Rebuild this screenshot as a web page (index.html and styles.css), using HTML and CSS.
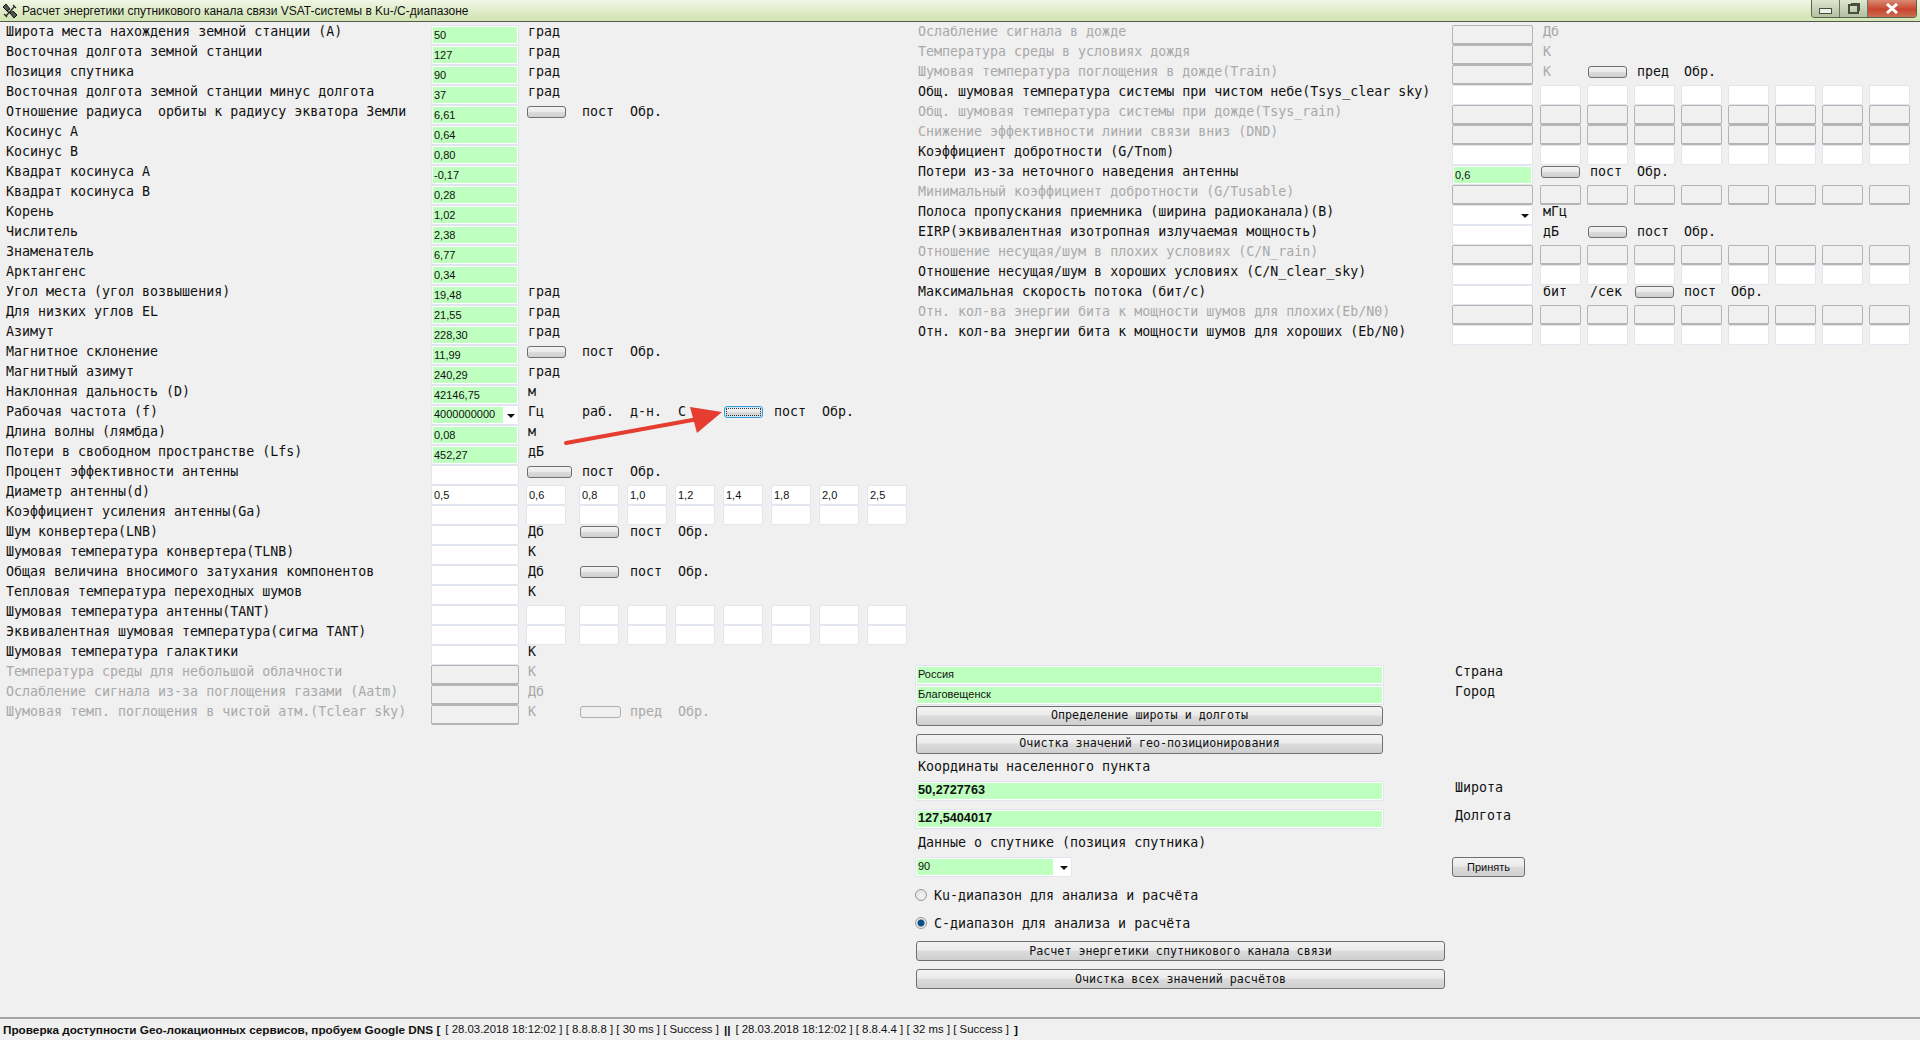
FILE: index.html
```html
<!DOCTYPE html>
<html lang="ru">

<head>
  <meta charset="UTF-8">
  <meta name="viewport" content="width=device-width">
  <title>Расчет энергетики спутникового канала связи</title>
  <link rel="stylesheet" href="styles.css">
</head>

<body>

  <header class="titlebar">
    <svg class="app-icon" width="16" height="16" viewBox="0 0 16 16">
      <path d="M1 4 L4 1 L8 6 L5 8 Z M8 10 L11 8 L15 12 L12 15 Z" fill="#555" stroke="#111" stroke-width="1" />
      <path d="M5 8 L8 10 M11 2 L14 5 M12 4 L4 13 M2 11 L5 14" fill="none" stroke="#222" stroke-width="1.2" />
    </svg>
    <span class="title">Расчет энергетики спутникового канала связи VSAT-системы в Ku-/C-диапазоне</span>
    <div class="winbtns">
      <span class="winbtn min"><i></i></span>
      <span class="winbtn max"><i></i></span>
      <span class="winbtn close">
        <svg width="16" height="11" viewBox="0 0 16 11">
          <path d="M3 1 L13 10 M13 1 L3 10" stroke="#fff" stroke-width="3" />
        </svg>
      </span>
    </div>
  </header>

  <main class="main">

    <section class="left">
      <div class="row"><label>Широта места нахождения земной станции (А)</label><input class="f ok" value="50"><div class="tail"><span class="t first">град</span></div></div>
      <div class="row"><label>Восточная долгота земной станции</label><input class="f ok" value="127"><div class="tail"><span class="t first">град</span></div></div>
      <div class="row"><label>Позиция спутника</label><input class="f ok" value="90"><div class="tail"><span class="t first">град</span></div></div>
      <div class="row"><label>Восточная долгота земной станции минус долгота</label><input class="f ok" value="37"><div class="tail"><span class="t first">град</span></div></div>
      <div class="row"><label>Отношение радиуса  орбиты к радиусу экватора Земли</label><input class="f ok" value="6,61"><div class="tail"><button class="b"></button><span class="t">пост</span><span class="t">Обр.</span></div></div>
      <div class="row"><label>Косинус А</label><input class="f ok" value="0,64"></div>
      <div class="row"><label>Косинус В</label><input class="f ok" value="0,80"></div>
      <div class="row"><label>Квадрат косинуса А</label><input class="f ok" value="-0,17"></div>
      <div class="row"><label>Квадрат косинуса В</label><input class="f ok" value="0,28"></div>
      <div class="row"><label>Корень</label><input class="f ok" value="1,02"></div>
      <div class="row"><label>Числитель</label><input class="f ok" value="2,38"></div>
      <div class="row"><label>Знаменатель</label><input class="f ok" value="6,77"></div>
      <div class="row"><label>Арктангенс</label><input class="f ok" value="0,34"></div>
      <div class="row"><label>Угол места (угол возвышения)</label><input class="f ok" value="19,48"><div class="tail"><span class="t first">град</span></div></div>
      <div class="row"><label>Для низких углов EL</label><input class="f ok" value="21,55"><div class="tail"><span class="t first">град</span></div></div>
      <div class="row"><label>Азимут</label><input class="f ok" value="228,30"><div class="tail"><span class="t first">град</span></div></div>
      <div class="row"><label>Магнитное склонение</label><input class="f ok" value="11,99"><div class="tail"><button class="b"></button><span class="t">пост</span><span class="t">Обр.</span></div></div>
      <div class="row"><label>Магнитный азимут</label><input class="f ok" value="240,29"><div class="tail"><span class="t first">град</span></div></div>
      <div class="row"><label>Наклонная дальность (D)</label><input class="f ok" value="42146,75"><div class="tail"><span class="t first">м</span></div></div>
      <div class="row"><label>Рабочая частота (f)</label><div class="combo f"><span class="combo-val">4000000000</span><i class="arrow"></i></div><div class="tail"><span class="t first">Гц</span><span class="t">раб.</span><span class="t">д-н.</span><span class="t">С</span><button class="b focus"></button><span class="t">пост</span><span class="t">Обр.</span></div></div>
      <div class="row"><label>Длина волны (лямбда)</label><input class="f ok" value="0,08"><div class="tail"><span class="t first">м</span></div></div>
      <div class="row"><label>Потери в свободном пространстве (Lfs)</label><input class="f ok" value="452,27"><div class="tail"><span class="t first">дБ</span></div></div>
      <div class="row"><label>Процент эффективности антенны</label><input class="f"><div class="tail"><button class="b wide"></button><span class="t">пост</span><span class="t">Обр.</span></div></div>
      <div class="row"><label>Диаметр антенны(d)</label><input class="f" value="0,5"><div class="tail"><input class="c" value="0,6"><input class="c" value="0,8"><input class="c" value="1,0"><input class="c" value="1,2"><input class="c" value="1,4"><input class="c" value="1,8"><input class="c" value="2,0"><input class="c" value="2,5"></div></div>
      <div class="row"><label>Коэффициент усиления антенны(Ga)</label><input class="f"><div class="tail"><input class="c"><input class="c"><input class="c"><input class="c"><input class="c"><input class="c"><input class="c"><input class="c"></div></div>
      <div class="row"><label>Шум конвертера(LNB)</label><input class="f"><div class="tail"><span class="t first">Дб</span><button class="b"></button><span class="t">пост</span><span class="t">Обр.</span></div></div>
      <div class="row"><label>Шумовая температура конвертера(TLNB)</label><input class="f"><div class="tail"><span class="t first">К</span></div></div>
      <div class="row"><label>Общая величина вносимого затухания компонентов</label><input class="f"><div class="tail"><span class="t first">Дб</span><button class="b"></button><span class="t">пост</span><span class="t">Обр.</span></div></div>
      <div class="row"><label>Тепловая температура переходных шумов</label><input class="f"><div class="tail"><span class="t first">К</span></div></div>
      <div class="row"><label>Шумовая температура антенны(TANT)</label><input class="f"><div class="tail"><input class="c"><input class="c"><input class="c"><input class="c"><input class="c"><input class="c"><input class="c"><input class="c"></div></div>
      <div class="row"><label>Эквивалентная шумовая температура(сигма TANT)</label><input class="f"><div class="tail"><input class="c"><input class="c"><input class="c"><input class="c"><input class="c"><input class="c"><input class="c"><input class="c"></div></div>
      <div class="row"><label>Шумовая температура галактики</label><input class="f"><div class="tail"><span class="t first">К</span></div></div>
      <div class="row off"><label>Температура среды для небольшой облачности</label><input class="f" disabled><div class="tail"><span class="t first">К</span></div></div>
      <div class="row off"><label>Ослабление сигнала из-за поглощения газами (Aatm)</label><input class="f" disabled><div class="tail"><span class="t first">Дб</span></div></div>
      <div class="row off"><label>Шумовая темп. поглощения в чистой атм.(Tclear sky)</label><input class="f" disabled><div class="tail"><span class="t first">К</span><button class="b" disabled></button><span class="t">пред</span><span class="t">Обр.</span></div></div>
    </section>

    <section class="right">
      <div class="row off"><label>Ослабление сигнала в дожде</label><input class="f" disabled><div class="tail"><span class="t">Дб</span></div></div>
      <div class="row off"><label>Температура среды в условиях дождя</label><input class="f" disabled><div class="tail"><span class="t">К</span></div></div>
      <div class="row off"><label>Шумовая температура поглощения в дожде(Train)</label><input class="f" disabled><div class="tail"><span class="t">К</span><button class="b on"></button><span class="t on">пред</span><span class="t on">Обр.</span></div></div>
      <div class="row"><label>Общ. шумовая температура системы при чистом небе(Tsys_clear sky)</label><input class="f"><div class="tail"><input class="c"><input class="c"><input class="c"><input class="c"><input class="c"><input class="c"><input class="c"><input class="c"></div></div>
      <div class="row off"><label>Общ. шумовая температура системы при дожде(Tsys_rain)</label><input class="f" disabled><div class="tail"><input class="c" disabled><input class="c" disabled><input class="c" disabled><input class="c" disabled><input class="c" disabled><input class="c" disabled><input class="c" disabled><input class="c" disabled></div></div>
      <div class="row off"><label>Снижение эффективности линии связи вниз (DND)</label><input class="f" disabled><div class="tail"><input class="c" disabled><input class="c" disabled><input class="c" disabled><input class="c" disabled><input class="c" disabled><input class="c" disabled><input class="c" disabled><input class="c" disabled></div></div>
      <div class="row"><label>Коэффициент добротности (G/Tnom)</label><input class="f"><div class="tail"><input class="c"><input class="c"><input class="c"><input class="c"><input class="c"><input class="c"><input class="c"><input class="c"></div></div>
      <div class="row"><label>Потери из-за неточного наведения антенны</label><input class="f ok" value="0,6"><div class="tail"><button class="b"></button><span class="t">пост</span><span class="t">Обр.</span></div></div>
      <div class="row off"><label>Минимальный коэффициент добротности (G/Tusable)</label><input class="f" disabled><div class="tail"><input class="c" disabled><input class="c" disabled><input class="c" disabled><input class="c" disabled><input class="c" disabled><input class="c" disabled><input class="c" disabled><input class="c" disabled></div></div>
      <div class="row"><label>Полоса пропускания приемника (ширина радиоканала)(B)</label><div class="combo f"><i class="arrow"></i></div><div class="tail"><span class="t">мГц</span></div></div>
      <div class="row"><label>EIRP(эквивалентная изотропная излучаемая мощность)</label><input class="f"><div class="tail"><span class="t">дБ</span><button class="b"></button><span class="t">пост</span><span class="t">Обр.</span></div></div>
      <div class="row off"><label>Отношение несущая/шум в плохих условиях (C/N_rain)</label><input class="f" disabled><div class="tail"><input class="c" disabled><input class="c" disabled><input class="c" disabled><input class="c" disabled><input class="c" disabled><input class="c" disabled><input class="c" disabled><input class="c" disabled></div></div>
      <div class="row"><label>Отношение несущая/шум в хороших условиях (C/N_clear_sky)</label><input class="f"><div class="tail"><input class="c"><input class="c"><input class="c"><input class="c"><input class="c"><input class="c"><input class="c"><input class="c"></div></div>
      <div class="row"><label>Максимальная скорость потока (бит/с)</label><input class="f"><div class="tail"><span class="t">бит</span><span class="t">/сек</span><button class="b"></button><span class="t">пост</span><span class="t">Обр.</span></div></div>
      <div class="row off"><label>Отн. кол-ва энергии бита к мощности шумов для плохих(Eb/N0)</label><input class="f" disabled><div class="tail"><input class="c" disabled><input class="c" disabled><input class="c" disabled><input class="c" disabled><input class="c" disabled><input class="c" disabled><input class="c" disabled><input class="c" disabled></div></div>
      <div class="row"><label>Отн. кол-ва энергии бита к мощности шумов для хороших (Eb/N0)</label><input class="f"><div class="tail"><input class="c"><input class="c"><input class="c"><input class="c"><input class="c"><input class="c"><input class="c"><input class="c"></div></div>

      <div class="geo">
        <div class="geo-row geo-city"><input class="wide-f ok" value="Россия"><span class="side">Страна</span></div>
        <div class="geo-row geo-city"><input class="wide-f ok" value="Благовещенск"><span class="side">Город</span></div>
        <button class="b big short find">Определение широты и долготы</button>
        <button class="b big short clear">Очистка значений гео-позиционирования</button>
        <p class="caption coords">Координаты населенного пункта</p>
        <div class="geo-row"><input class="wide-f ok strong" value="50,2727763"><span class="side">Широта</span></div>
        <div class="geo-row lng"><input class="wide-f ok strong" value="127,5404017"><span class="side">Долгота</span></div>
        <p class="caption sat">Данные о спутнике (позиция спутника)</p>
        <div class="sat-row">
          <div class="combo sat-combo"><span class="combo-val">90</span><i class="arrow"></i></div>
          <button class="b accept">Принять</button>
        </div>
        <p class="radio-line ku"><i class="radio"></i>Ku-диапазон для анализа и расчёта</p>
        <p class="radio-line c-band"><i class="radio checked"></i>С-диапазон для анализа и расчёта</p>
        <button class="b big long calc">Расчет энергетики спутникового канала связи</button>
        <button class="b big long clear-all">Очистка всех значений расчётов</button>
      </div>
    </section>

  </main>

  <footer class="status">
    <b>Проверка доступности Geo-локационных сервисов, пробуем Google DNS [</b>
    <span class="gap">[ 28.03.2018 18:12:02 ] [ 8.8.8.8 ] [ 30 ms ] [ Success ]</span>
    <b class="gap">||</b>
    <span class="gap">[ 28.03.2018 18:12:02 ] [ 8.8.4.4 ] [ 32 ms ] [ Success ]</span>
    <b class="gap">]</b>
  </footer>

  <svg class="pointer" width="170" height="44" viewBox="0 0 170 44">
    <path d="M6 38 L138 14" stroke="#e53d30" stroke-width="4" stroke-linecap="round" />
    <path d="M130 2 L162 7 L137 28 Z" fill="#e53d30" />
  </svg>

</body>

</html>
```

FILE: styles.css
```css
* {
  box-sizing: border-box;
  margin: 0;
  padding: 0;
}

html,
body {
  height: 100%;
}

body {
  position: relative;
  display: flex;
  flex-direction: column;
  overflow: hidden;
  background-color: #f0f0f0;
  color: #111;
  font-family: "DejaVu Sans Mono", monospace;
  font-size: 13.3px;
}

/* window title */
.titlebar {
  display: flex;
  align-items: center;
  height: 22px;
  flex: none;
  padding-left: 2px;
  background: linear-gradient(#f2f6e6, #d4e5b6 85%);
  border-bottom: 1px solid #55594c;
}

.app-icon {
  margin-right: 4px;
}

.title {
  font-family: "Liberation Sans", sans-serif;
  font-size: 12px;
  color: #111;
}

.winbtns {
  display: flex;
  align-self: flex-start;
  margin-left: auto;
  margin-right: 3px;
  height: 18px;
  border: 1px solid #58604e;
  border-top: none;
  border-radius: 0 0 4px 4px;
  overflow: hidden;
}

.winbtn {
  display: flex;
  align-items: center;
  justify-content: center;
  width: 28px;
  background: linear-gradient(#e0e6cf, #b2bfa0);
  border-right: 1px solid #6a7460;
}

.winbtn.min i {
  width: 13px;
  height: 6px;
  margin-top: 4px;
  background: #eef1ea;
  border: 1px solid #47503f;
}

.winbtn.max i {
  width: 11px;
  height: 10px;
  border: 2px solid #47503f;
  box-shadow: 2px -2px 0 -1px #47503f;
}

.winbtn.close {
  width: 48px;
  border-right: none;
  background: linear-gradient(#d98a74, #c8452e 55%, #c96e52);
}

/* form area */
.main {
  display: flex;
  flex: 1;
  padding-top: 3px;
}

.left {
  width: 918px;
  flex: none;
  padding-left: 6px;
}

.right {
  flex: 1;
}

.row {
  display: flex;
  height: 20px;
  white-space: pre;
}

.row label {
  flex: none;
  line-height: 14px;
}

.left .row label {
  width: 425px;
}

.right .row label {
  width: 534px;
}

.off label,
.off .t {
  color: #a9a9a9;
}

.off .t.on {
  color: #111;
}

/* fields */
input {
  font-family: "Liberation Sans", sans-serif;
  font-size: 11px;
  color: #111;
  background-color: #fff;
  border: 1px solid #e1e6ee;
  border-radius: 2px;
  padding: 0 2px 1px;
  outline: none;
}

input:disabled {
  background-color: #f0f0f0;
  border: 1px solid #b4b4b4;
  border-bottom: 2px solid #b4b4b4;
}

.ok {
  background-color: #bfffbf;
  box-shadow: inset 0 0 0 1px #fff;
}

.f {
  flex: none;
  height: 20px;
}

.left .f {
  width: 88px;
}

.right .f {
  width: 81px;
}

.c {
  width: 40px;
  height: 20px;
}

.right .c {
  width: 41px;
}

/* trailing columns of a row */
.tail {
  display: grid;
  grid-auto-flow: column;
  flex: none;
  margin-left: 7px;
  grid-template-columns: 53px repeat(7, 48px) 40px;
}

.right .tail {
  margin-left: 7px;
  grid-template-columns: repeat(8, 47px);
}

.t {
  line-height: 14px;
  padding-left: 3px;
}

.t.first {
  padding-left: 2px;
}

/* buttons */
.b {
  height: 12px;
  width: 39px;
  margin: 1px 0 0 1px;
  border: 1px solid #707070;
  border-radius: 3px;
  background: linear-gradient(#f3f3f3, #ebebeb 45%, #dcdcdc 50%, #cfcfcf);
  font-family: "DejaVu Sans Mono", monospace;
  font-size: 11.7px;
  color: #111;
}

.b.wide {
  width: 45px;
}

.b:disabled {
  background: #f0f0f0;
  border-color: #adadad;
  width: 41px;
}

.b.focus {
  border-color: #3c9bdc;
  box-shadow: inset 0 0 0 1px #cde8f8;
  outline: 1px dotted #333;
  outline-offset: -3px;
}

.b.big {
  display: block;
  height: 20px;
  margin: 0;
  margin-left: 1px;
}

.short {
  width: 467px;
  padding-bottom: 2px;
}

.long {
  width: 529px;
}

/* geo block under the right table */
.geo {
  margin-top: 320px;
  width: 640px;
  margin-left: -3px;
}

.geo-row {
  display: flex;
  align-items: flex-start;
  height: 20px;
}

.wide-f {
  width: 469px;
  height: 20px;
  flex: none;
  padding-bottom: 3px;
}

.geo-city {
  height: 20px;
}

.side {
  margin-left: 71px;
  line-height: 13px;
}

.strong {
  font-size: 12.7px;
  font-weight: bold;
}

.find {
  margin-top: 1px !important;
}

.clear {
  margin-top: 8px !important;
}

.caption {
  margin-left: 3px;
  line-height: 14px;
}

.coords {
  margin-top: 6px;
  margin-bottom: 7px;
}

.lng {
  margin-top: 8px;
}

.sat {
  margin-top: 7px;
  margin-bottom: 7px;
}

.sat-row {
  display: flex;
  height: 21px;
}

.combo {
  position: relative;
  background: #fff;
  border: 1px solid #e1e6ee;
  border-radius: 2px;
  padding: 1px;
  height: 20px;
  display: flex;
}

.combo-val {
  display: block;
  height: 100%;
  width: 70px;
  padding-left: 1px;
  background: #bfffbf;
  font-family: "Liberation Sans", sans-serif;
  font-size: 11px;
  line-height: 15px;
}

.arrow {
  position: absolute;
  top: 8px;
  right: 3px;
  border: 4px solid transparent;
  border-top-color: #111;
  border-bottom: none;
}

.sat-combo {
  width: 157px;
  flex: none;
}

.sat-combo .combo-val {
  width: 136px;
}

.accept {
  height: 20px;
  width: 73px;
  margin: 0 0 0 380px;
  font-family: "Liberation Sans", sans-serif;
  font-size: 11px;
}

.radio-line {
  display: flex;
  align-items: center;
  gap: 7px;
  height: 16px;
}

.ku {
  margin-top: 9px;
  margin-bottom: 12px;
}

.c-band {
  margin-bottom: 10px;
}

.radio {
  width: 12px;
  height: 12px;
  flex: none;
  border: 1px solid #9a9a9a;
  border-radius: 50%;
  background: radial-gradient(circle at 60% 60%, #f6f6f6, #d8d8d8);
}

.radio.checked {
  background: radial-gradient(circle, #0d4f86 0 3px, #e8e8e8 4px);
}

.clear-all {
  margin-top: 8px !important;
}

/* status line */
.status {
  display: flex;
  align-items: center;
  flex: none;
  height: 23px;
  padding-left: 3px;
  padding-bottom: 1px;
  border-top: 2px solid #a5a5a5;
  font-family: "Liberation Sans", sans-serif;
  font-size: 11.4px;
  white-space: pre;
}

.status b {
  font-size: 11.76px;
}

.status .gap {
  margin-left: 5px;
}

/* red arrow drawn over the form */
.pointer {
  position: absolute;
  left: 560px;
  top: 405px;
}
```
